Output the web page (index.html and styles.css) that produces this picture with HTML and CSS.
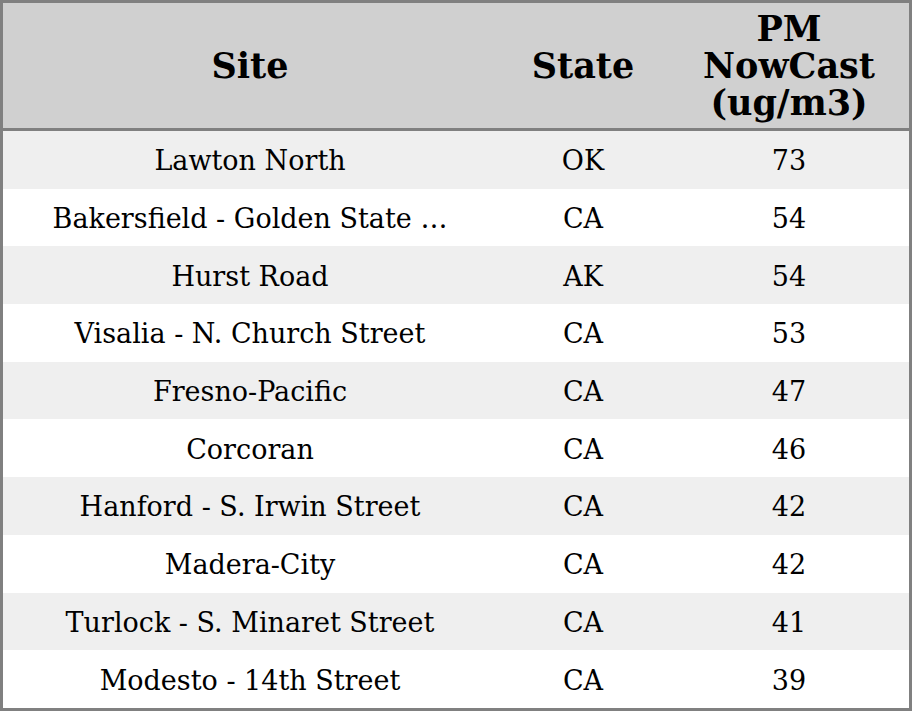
FILE: index.html
```html
<!DOCTYPE html>
<html>
<head>
<meta charset="utf-8">
<link rel="stylesheet" href="styles.css">
</head>
<body>
<table class="aq">
  <colgroup>
    <col class="c-site">
    <col class="c-state">
    <col class="c-pm">
  </colgroup>
  <thead>
    <tr><th>Site</th><th>State</th><th>PM<br>NowCast<br>(ug/m3)</th></tr>
  </thead>
  <tbody>
    <tr><td>Lawton North</td><td>OK</td><td>73</td></tr>
    <tr><td>Bakersfield - Golden State …</td><td>CA</td><td>54</td></tr>
    <tr><td>Hurst Road</td><td>AK</td><td>54</td></tr>
    <tr><td>Visalia - N. Church Street</td><td>CA</td><td>53</td></tr>
    <tr><td>Fresno-Pacific</td><td>CA</td><td>47</td></tr>
    <tr><td>Corcoran</td><td>CA</td><td>46</td></tr>
    <tr><td>Hanford - S. Irwin Street</td><td>CA</td><td>42</td></tr>
    <tr><td>Madera-City</td><td>CA</td><td>42</td></tr>
    <tr><td>Turlock - S. Minaret Street</td><td>CA</td><td>41</td></tr>
    <tr><td>Modesto - 14th Street</td><td>CA</td><td>39</td></tr>
  </tbody>
</table>
</body>
</html>
```
FILE: styles.css
```css
html, body {
  margin: 0;
  padding: 0;
  background: #ffffff;
}
.aq {
  width: 912px;
  height: 711px;
  border-collapse: separate;
  border-spacing: 0;
  border: 3px solid #808080;
  box-sizing: border-box;
  table-layout: fixed;
  font-family: "DejaVu Serif", serif;
  color: #000;
}
.c-site { width: 494px; }
.c-state { width: 172px; }
.c-pm { width: 240px; }
.aq th {
  background: #d0d0d0;
  font-size: 35px;
  font-weight: bold;
  line-height: 37px;
  height: 125px;
  padding: 0;
  border-bottom: 3px solid #808080;
  text-align: center;
  vertical-align: middle;
}
.aq td {
  font-size: 27px;
  height: 57.7px;
  padding: 2px 0 0;
  box-sizing: border-box;
  text-align: center;
  vertical-align: middle;
  white-space: nowrap;
}
.aq tbody tr:nth-child(odd) td {
  background: #efefef;
}
```
